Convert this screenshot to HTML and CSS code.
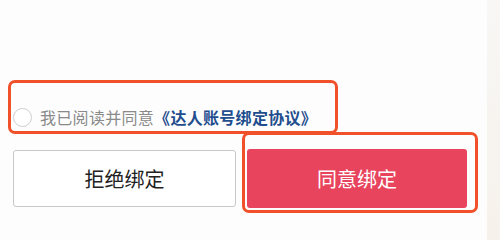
FILE: index.html
```html
<!DOCTYPE html>
<html lang="zh-CN">
<head>
<meta charset="utf-8">
<title>绑定</title>
<link rel="stylesheet" href="styles.css">
</head>
<body>
<div class="page">
  <main class="main">
    <div class="agree">
      <span class="radio"></span>
      <span class="agree-text">我已阅读并同意</span><a class="agree-link">《达人账号绑定协议》</a>
    </div>
    <div class="actions">
      <button class="btn btn-reject">拒绝绑定</button>
      <button class="btn btn-accept">同意绑定</button>
    </div>
    <div class="mark mark-agree"></div>
    <div class="mark mark-accept"></div>
  </main>
  <aside class="side"></aside>
</div>
</body>
</html>
```
FILE: styles.css
```css
html, body {
  margin: 0;
  padding: 0;
  width: 500px;
  height: 240px;
  overflow: hidden;
  font-family: "Noto Sans CJK SC", "Noto Sans", sans-serif;
  background: #fdfdfd;
}
.page {
  display: flex;
  width: 500px;
  height: 240px;
}
.main {
  position: relative;
  width: 487px;
  padding-top: 107px;
  box-sizing: border-box;
}
.side {
  width: 13px;
  background: linear-gradient(180deg, #f8f7f5 0%, #f6f1eb 100%);
}
.agree {
  display: flex;
  align-items: center;
  height: 20px;
  padding-left: 13px;
  font-size: 16px;
  line-height: 20px;
  white-space: nowrap;
  letter-spacing: 0.3px;
}
.radio {
  width: 19px;
  height: 19px;
  border: 1px solid #cfcfcf;
  border-radius: 50%;
  box-sizing: border-box;
  margin-right: 8px;
  background: #fff;
}
.agree-text {
  color: #8a8a8a;
}
.agree-link {
  color: #1f4d8e;
  font-weight: 700;
}
.actions {
  display: flex;
  align-items: center;
  gap: 11px;
  height: 59px;
  margin-top: 22px;
  padding-left: 13px;
}
.btn {
  font-family: inherit;
  font-size: 20px;
  border-radius: 3px;
  padding: 0;
  cursor: pointer;
}
.btn-reject {
  width: 223px;
  height: 57px;
  background: #fff;
  border: 1px solid #c8c8c8;
  color: #222;
}
.btn-accept {
  width: 220px;
  height: 59px;
  background: #e8445d;
  border: none;
  color: #fff;
}
.mark {
  position: absolute;
  border: 3px solid #f0502a;
  border-radius: 7px;
  box-sizing: border-box;
}
.mark-agree {
  left: 8px;
  top: 80px;
  width: 330px;
  height: 54px;
}
.mark-accept {
  left: 242px;
  top: 132px;
  width: 236px;
  height: 81px;
}
```
